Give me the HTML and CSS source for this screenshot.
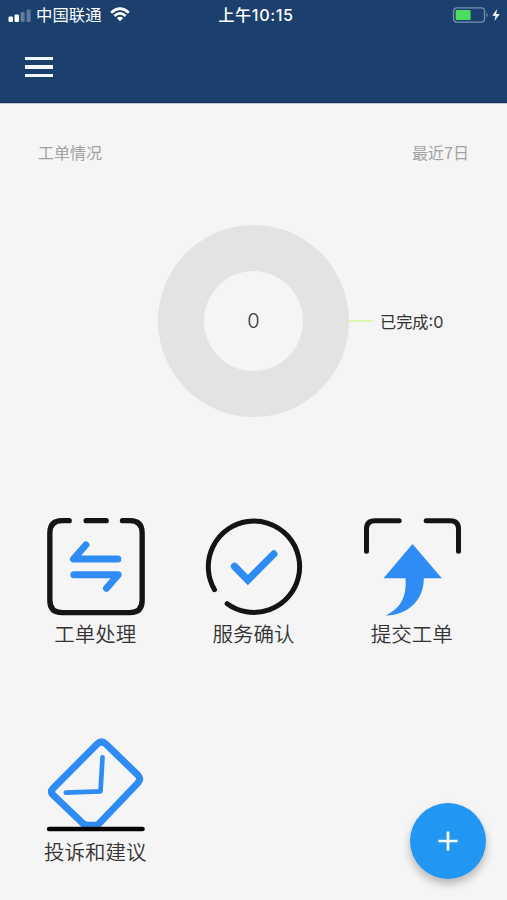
FILE: index.html
```html
<!DOCTYPE html>
<html lang="zh-CN">
<head>
<meta charset="utf-8">
<meta name="viewport" content="width=device-width, initial-scale=1">
<title>工单情况</title>
<link rel="stylesheet" href="styles.css">
</head>
<body>
<header class="header">
  <div class="status">
    <div class="carrier">
      <svg class="signal" width="24" height="14" viewBox="0 0 24 14" fill="#fff">
        <rect x="0.5" y="7.5" width="4.5" height="5.5" rx="1.2"/>
        <rect x="6.5" y="5.5" width="4.5" height="7.5" rx="1.2"/>
        <rect x="12.5" y="3" width="4.2" height="10" rx="1" opacity=".3"/>
        <rect x="18.5" y="0.5" width="4.2" height="12.5" rx="1" opacity=".3"/>
      </svg>
      <span class="carrier-name">中国联通</span>
      <svg class="wifi" width="20" height="15" viewBox="0 0 20 15" fill="none" stroke="#fff" stroke-width="2.7">
        <path d="M1.2 5.7Q10-2.3 18.8 5.7"/>
        <path d="M4.4 8.9Q10 3.9 15.6 8.9"/>
        <path d="M6.8 11.1Q10 8.4 13.2 11.1L10 14.3Z" fill="#fff" stroke="none"/>
      </svg>
    </div>
    <time class="clock">上午10:15</time>
    <svg class="battery" width="50" height="18" viewBox="0 0 50 18">
      <rect x="1.5" y="1.8" width="31" height="14.4" rx="3.4" fill="none" stroke="#7891ae" stroke-width="1.3"/>
      <rect x="3.6" y="4" width="15" height="10" rx="1" fill="#4cdc60"/>
      <path d="M34.5 6.5Q37 9 34.5 11.5Z" fill="#7891ae"/>
      <path d="M45 2.9L40.4 9.8H43.6L42.4 15L47.8 7.9H44.3Z" fill="#fff"/>
    </svg>
  </div>
  <button class="menu" aria-label="菜单"><i></i><i></i><i></i></button>
</header>

<main>
  <div class="summary"><span>工单情况</span><span>最近7日</span></div>

  <section class="chart">
    <div class="donut"><span>0</span></div>
    <div class="legend"><i></i><span>已完成:0</span></div>
  </section>

  <nav class="tiles">
    <a class="tile">
      <svg width="130" height="113" viewBox="0.5 0 390 339" fill="none" stroke-linecap="round">
        <path d="M118 47H97Q60 47 60 84V286Q60 323 97 323H300Q337 323 337 286V84Q337 47 300 47H278M169 47H229" stroke="#141414" stroke-width="16"/>
        <path d="M168 120L131 162H264M132 209H265L230 250" stroke="#2f8cf5" stroke-width="21" stroke-linejoin="round"/>
      </svg>
      <span>工单处理</span>
    </a>
    <a class="tile">
      <svg width="130" height="113" viewBox="-6.5 0 390 339" fill="none" stroke-linecap="round">
        <path d="M73 254A137 137 0 1 1 111 296" stroke="#141414" stroke-width="15"/>
        <path d="M133 184L173 225L251 147" stroke="#2f8cf5" stroke-width="22"/>
      </svg>
      <span>服务确认</span>
    </a>
    <a class="tile">
      <svg width="130" height="113" viewBox="-9.5 0 390 339" fill="none">
        <path d="M49 139V72Q49 47 74 47H147M228 47H300Q325 47 325 72V139" stroke="#141414" stroke-width="15" stroke-linecap="round"/>
        <path d="M187 117L275 220H221C221 285 175 330 107 332C150 309 170 280 166 220H100Z" fill="#2f8cf5"/>
      </svg>
      <span>提交工单</span>
    </a>
    <a class="tile">
      <svg width="130" height="113" viewBox="0.5 0 390 339" fill="none" stroke-linecap="round" stroke-linejoin="round">
        <path d="M202 57Q215 45 228 57L324 150Q335 162 324 174L217 286Q205 301 195 301H174Q163 301 154 290L70 210Q60 200 70 190Z" stroke="#2f8cf5" stroke-width="21"/>
        <path d="M218 97L212 199L108 203" stroke="#2f8cf5" stroke-width="14"/>
        <path d="M58 312H338" stroke="#050505" stroke-width="14"/>
      </svg>
      <span>投诉和建议</span>
    </a>
  </nav>
</main>

<button class="fab" aria-label="新建">
  <svg width="20" height="20" viewBox="0 0 20 20" stroke="#fff" stroke-width="2.7"><path d="M10 .4V19.6M.4 10H19.6"/></svg>
</button>
</body>
</html>
```

FILE: styles.css
```css
* {
  box-sizing: border-box;
}

body {
  margin: 0;
  height: 900px;
  overflow: hidden;
  background: #f5f5f5;
  color: #333;
  font-family: "Noto Sans CJK SC", sans-serif;
}

button {
  border: 0;
  padding: 0;
  background: none;
}

svg {
  display: block;
}

.header {
  height: 103px;
  background: #1b406d;
  border-bottom: 1px solid #173060;
  box-shadow: 0 1px 0 #c5cad8;
  color: #fff;
}

.status {
  display: grid;
  grid-template-columns: 1fr auto 1fr;
  align-items: center;
  height: 30px;
  padding: 0 3px 0 8px;
}

.carrier {
  display: flex;
  align-items: center;
}

.carrier-name {
  margin: -2px 0 0 4px;
  font-size: 16.4px;
  line-height: 24px;
}

.signal {
  margin-top: 1px;
}

.wifi {
  margin: -2px 0 0 8px;
}

.clock {
  font-family: Inter, "Noto Sans CJK SC", sans-serif;
  font-size: 16.2px;
  font-weight: 500;
  letter-spacing: .6px;
  line-height: 24px;
}

.battery {
  justify-self: end;
  margin-right: 2px;
}

.menu {
  display: flex;
  flex-direction: column;
  gap: 5px;
  width: 28px;
  margin: 27px 0 0 25px;
}

.menu i {
  height: 3.3px;
  background: #f3f8ff;
}

.summary {
  display: flex;
  justify-content: space-between;
  padding: 37px 38px 0;
  color: #a2a2a2;
  font-size: 16px;
  line-height: 24px;
}

.chart {
  display: flex;
  align-items: center;
  padding: 61px 0 0 158px;
}

.donut {
  display: flex;
  align-items: center;
  justify-content: center;
  width: 191px;
  height: 192px;
  border: 46px solid #e3e3e3;
  border-radius: 50%;
  font-family: Inter, sans-serif;
  font-size: 20px;
  font-weight: 300;
}

.legend {
  display: flex;
  align-items: center;
  font-family: Inter, "Noto Sans CJK SC", sans-serif;
  font-size: 16.2px;
  line-height: 24px;
}

.legend span {
  padding-top: 1px;
}

.legend i {
  width: 24px;
  height: 2px;
  margin-right: 7px;
  background: #dcf5b0;
}

.tiles {
  display: grid;
  grid-template-columns: repeat(3, 1fr);
  grid-auto-rows: 220px;
  padding: 88px 16px 0;
}

.tile {
  display: flex;
  flex-direction: column;
  align-items: center;
  font-size: 20.5px;
  font-weight: 350;
  line-height: 30px;
}

.tile:nth-child(4) span {
  margin-top: -2px;
}

.fab {
  position: absolute;
  left: 410px;
  top: 803px;
  display: flex;
  align-items: center;
  justify-content: center;
  width: 76px;
  height: 76px;
  border-radius: 50%;
  background: #2196f3;
  box-shadow: 0 5px 9px rgba(0, 0, 0, .26);
}
```
